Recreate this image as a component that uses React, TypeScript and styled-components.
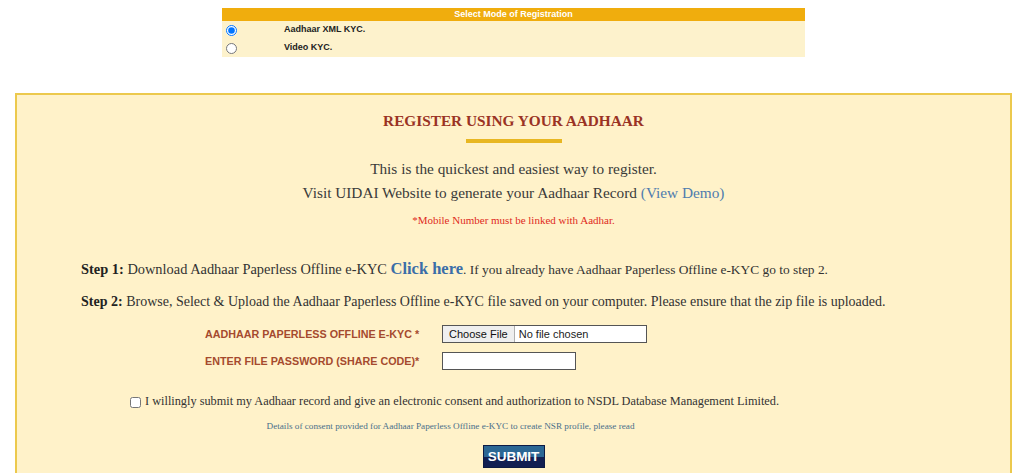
import React, { useState } from 'react';
import styled, { createGlobalStyle } from 'styled-components';

const GlobalStyle = createGlobalStyle`
  html, body {
    margin: 0;
    padding: 0;
    background: #ffffff;
  }
  body {
    font-family: "Liberation Serif", "Times New Roman", serif;
    color: #333333;
  }
`;

const App: React.FC = () => {
  const [mode, setMode] = useState<'xml' | 'video'>('xml');
  const [agreed, setAgreed] = useState(false);

  return (
    <>
      <GlobalStyle />
      <Page>
        <ModeTable>
          <ModeHeader>Select Mode of Registration</ModeHeader>
          <ModeRow $height={17}>
            <RadioCell>
              <input type="radio" name="mode" checked={mode === 'xml'} onChange={() => setMode('xml')} />
            </RadioCell>
            <ModeLabel>Aadhaar XML KYC.</ModeLabel>
          </ModeRow>
          <ModeRow $height={19}>
            <RadioCell>
              <input type="radio" name="mode" checked={mode === 'video'} onChange={() => setMode('video')} />
            </RadioCell>
            <ModeLabel>Video KYC.</ModeLabel>
          </ModeRow>
        </ModeTable>

        <RegisterBox>
          <Title>REGISTER USING YOUR AADHAAR</Title>
          <TitleBar />
          <Intro>This is the quickest and easiest way to register.</Intro>
          <Intro>
            Visit UIDAI Website to generate your Aadhaar Record <DemoLink href="#">(View Demo)</DemoLink>
          </Intro>
          <Warning>*Mobile Number must be linked with Aadhar.</Warning>

          <Steps>
            <Step $size={14.4}>
              <b>Step 1:</b> Download Aadhaar Paperless Offline e-KYC <ClickHere href="#">Click here</ClickHere>
              <StepTail>. If you already have Aadhaar Paperless Offline e-KYC go to step 2.</StepTail>
            </Step>
            <Step $size={14}>
              <b>Step 2:</b> Browse, Select &amp; Upload the Aadhaar Paperless Offline e-KYC file saved on your computer.
              Please ensure that the zip file is uploaded.
            </Step>
          </Steps>

          <FormGrid>
            <FieldLabel>AADHAAR PAPERLESS OFFLINE E-KYC *</FieldLabel>
            <FileBox>
              <ChooseButton type="button">Choose File</ChooseButton>
              <FileName>No file chosen</FileName>
            </FileBox>
            <FieldLabel>ENTER FILE PASSWORD (SHARE CODE)*</FieldLabel>
            <PasswordInput type="password" />
          </FormGrid>

          <Consent>
            <input type="checkbox" checked={agreed} onChange={() => setAgreed(!agreed)} />
            <span>
              I willingly submit my Aadhaar record and give an electronic consent and authorization to NSDL Database
              Management Limited.
            </span>
          </Consent>
          <ConsentNote href="#">
            Details of consent provided for Aadhaar Paperless Offline e-KYC to create NSR profile, please read
          </ConsentNote>

          <SubmitButton type="button">SUBMIT</SubmitButton>
        </RegisterBox>
      </Page>
    </>
  );
};

// --- STYLED COMPONENTS ---
const Page = styled.div`
  padding: 8px 12px 0 15px;
`;

const ModeTable = styled.div`
  width: 583px;
  margin: 0 0 36px 207px;
  background: #fdf2cc;
  font-family: "Liberation Sans", Arial, sans-serif;
`;

const ModeHeader = styled.div`
  height: 13px;
  line-height: 13px;
  background: #f0ad0d;
  color: #ffffff;
  font-size: 9px;
  font-weight: 700;
  text-align: center;
`;

const ModeRow = styled.div<{ $height: number }>`
  display: flex;
  align-items: center;
  height: ${({ $height }) => $height}px;
`;

const RadioCell = styled.div`
  width: 62px;
  display: flex;
  align-items: center;
  input {
    width: 11px;
    height: 11px;
    margin: 2px 0 0 4px;
  }
`;

const ModeLabel = styled.span`
  font-size: 9px;
  font-weight: 700;
  color: #222222;
  margin-top: -2px;
`;

const RegisterBox = styled.div`
  border: 2px solid #ecc94d;
  background: #fff2c9;
  padding: 17px 0 40px;
  text-align: center;
  min-height: 400px;
`;

const Title = styled.h2`
  margin: 0;
  font-size: 15.3px;
  font-weight: 700;
  color: #9a3324;
  line-height: 18px;
`;

const TitleBar = styled.div`
  width: 96px;
  height: 4px;
  margin: 9px auto 17px;
  background: #e8b722;
`;

const Intro = styled.p`
  margin: 0 0 6px;
  font-size: 15.3px;
  line-height: 18px;
  color: #3a3a3a;
`;

const DemoLink = styled.a`
  color: #4f7cae;
  text-decoration: none;
`;

const Warning = styled.p`
  margin: 12px 0 0;
  font-size: 11px;
  color: #e02a22;
`;

const Steps = styled.div`
  margin: 34px 0 0 64px;
  text-align: left;
`;

const Step = styled.p<{ $size: number }>`
  margin: 0 0 14px;
  font-size: ${({ $size }) => $size}px;
  line-height: 18px;
  color: #333333;
  b {
    color: #222222;
  }
`;

const StepTail = styled.span`
  font-size: 13.4px;
`;

const ClickHere = styled.a`
  font-size: 16.5px;
  font-weight: 700;
  color: #3b6ea8;
  text-decoration: none;
`;

const FormGrid = styled.div`
  display: grid;
  grid-template-columns: 237px auto;
  justify-content: start;
  row-gap: 9px;
  align-items: center;
  margin: 13px 0 0 188px;
  text-align: left;
`;

const FieldLabel = styled.label`
  font-family: "Liberation Sans", Arial, sans-serif;
  font-size: 10.75px;
  font-weight: 700;
  color: #a54a2e;
`;

const FileBox = styled.div`
  display: flex;
  align-items: center;
  width: 203px;
  height: 16px;
  border: 1px solid #555555;
  background: #ffffff;
  font-family: "Liberation Sans", Arial, sans-serif;
  font-size: 11px;
`;

const ChooseButton = styled.button`
  height: 16px;
  padding: 0 6px;
  margin: 0;
  border: none;
  border-right: 1px solid #b0b0b0;
  background: #efefef;
  font-family: inherit;
  font-size: 11px;
  color: #111111;
`;

const FileName = styled.span`
  padding-left: 4px;
  color: #222222;
`;

const PasswordInput = styled.input`
  box-sizing: border-box;
  width: 134px;
  height: 18px;
  margin: 0;
  border: 1px solid #555555;
  background: #ffffff;
`;

const Consent = styled.label`
  display: flex;
  align-items: center;
  gap: 4px;
  margin: 24px 0 0 113px;
  text-align: left;
  font-size: 12.3px;
  color: #333333;
  input {
    width: 11px;
    height: 11px;
    margin: 2px 0 0;
  }
`;

const ConsentNote = styled.a`
  display: block;
  margin-top: 12px;
  padding-right: 126px;
  font-size: 9.2px;
  color: #4a6f8a;
  text-decoration: none;
`;

const SubmitButton = styled.button`
  display: block;
  margin: 14px auto 0;
  width: 62px;
  height: 23px;
  padding: 0;
  border: 1px solid #0c1b45;
  background: linear-gradient(to bottom, #2b6794 0%, #2b6794 50%, #111f52 50%, #111f52 100%);
  color: #ffffff;
  font-family: "Liberation Sans", Arial, sans-serif;
  font-size: 13.5px;
  font-weight: 700;
`;

export default App;
